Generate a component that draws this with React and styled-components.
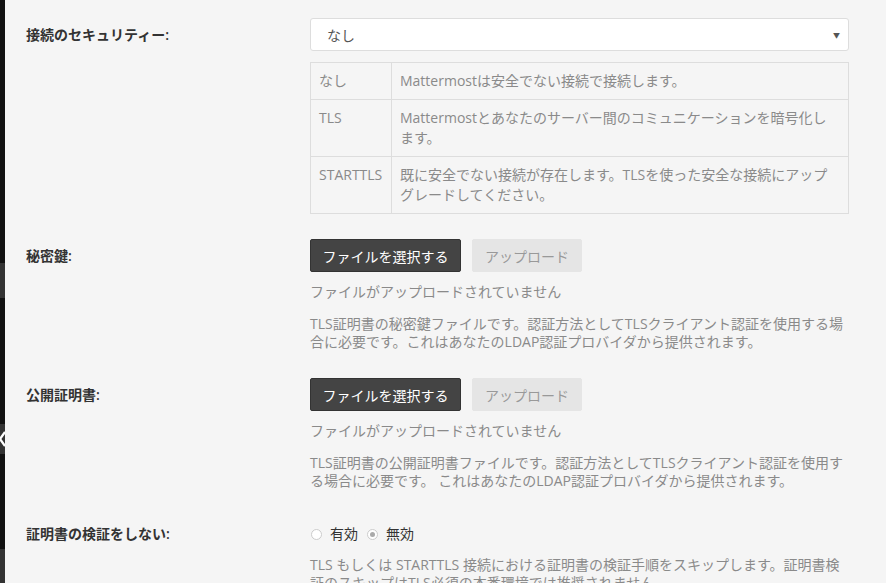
import React from "react";
import styled, { createGlobalStyle } from "styled-components";

const GlobalStyle = createGlobalStyle`
  html, body {
    margin: 0;
    padding: 0;
    background: #f5f5f5;
    overflow: hidden;
  }
  body {
    font-family: "Open Sans", "Noto Sans CJK JP", sans-serif;
    font-size: 14px;
    color: #333;
  }
`;

const Page = styled.div`
  display: flex;
  height: 583px;
  overflow: hidden;
`;

const Sidebar = styled.div`
  width: 5px;
  flex-shrink: 0;
  display: flex;
  flex-direction: column;
  background: #111;
`;

const SideItem = styled.div`
  height: ${(p) => p.h}px;
  margin-top: ${(p) => p.top}px;
  background: #333;
  display: flex;
  align-items: center;
  overflow: hidden;
  flex-shrink: 0;
`;

const Main = styled.div`
  flex: 1;
  padding: 18px 0 0 21px;
`;

const FormGroup = styled.div`
  display: grid;
  grid-template-columns: 284px 539px;
  margin-bottom: ${(p) => p.gap ?? 26}px;
`;

const Label = styled.div`
  padding-top: 7px;
  line-height: 20px;
  font-weight: 600;
  color: #333;
`;

const SelectBox = styled.div`
  height: 31px;
  border: 1px solid #ddd;
  border-radius: 3px;
  background: #fff;
  display: flex;
  align-items: center;
  justify-content: space-between;
  padding: 0 8px 0 16px;
  color: #555;
  margin-bottom: 11px;
`;

const Caret = styled.span`
  font-size: 7px;
  color: #555;
`;

const Table = styled.table`
  width: 100%;
  border-collapse: collapse;
  color: #8a8a8a;
  line-height: 20px;

  td {
    border: 1px solid #ddd;
    padding: 8px;
    vertical-align: top;
  }
  td:first-child {
    width: 64px;
  }
`;

const ButtonRow = styled.div`
  display: flex;
  gap: 11px;
`;

const Button = styled.div`
  height: 33px;
  box-sizing: border-box;
  padding: 0 ${(p) => (p.dark ? 11.5 : 12)}px;
  display: flex;
  align-items: center;
  border-radius: 2px;
  background: ${(p) => (p.dark ? "#444" : "#e5e5e5")};
  color: ${(p) => (p.dark ? "#fff" : "#999")};
  border: 1px solid ${(p) => (p.dark ? "#333" : "#e5e5e5")};
`;

const Status = styled.div`
  margin-top: 10px;
  line-height: 20px;
  color: #8a8a8a;
`;

const Help = styled.div`
  margin-top: ${(p) => p.top ?? 13}px;
  line-height: 18px;
  color: #8a8a8a;
  white-space: nowrap;
`;

const RadioRow = styled.div`
  padding-top: 7px;
  display: flex;
  align-items: center;
  line-height: 20px;
  color: #333;
`;

const Radio = styled.span`
  width: 11px;
  height: 11px;
  box-sizing: border-box;
  border-radius: 50%;
  border: 1px solid #ccc;
  background: #fff;
  margin: 0 8px 0 ${(p) => (p.first ? 1 : 9)}px;
  display: flex;
  align-items: center;
  justify-content: center;

  &::after {
    content: "";
    width: 5px;
    height: 5px;
    border-radius: 50%;
    background: ${(p) => (p.checked ? "#aaa" : "transparent")};
  }
`;

const Chevron = () => (
  <svg width="5" height="16" viewBox="0 0 5 16">
    <path d="M5 1 L0 8 L5 15" stroke="#fff" strokeWidth="2.2" fill="none" />
  </svg>
);

const FileField = ({ help }) => (
  <div>
    <ButtonRow>
      <Button dark>ファイルを選択する</Button>
      <Button>アップロード</Button>
    </ButtonRow>
    <Status>ファイルがアップロードされていません</Status>
    <Help>{help}</Help>
  </div>
);

export default function App() {
  return (
    <>
      <GlobalStyle />
      <Page>
        <Sidebar>
          <SideItem top={263} h={35} />
          <SideItem top={126} h={30}>
            <Chevron />
          </SideItem>
          <SideItem top={95} h={40} />
        </Sidebar>
        <Main>
          <FormGroup gap={25}>
            <Label>接続のセキュリティー:</Label>
            <div>
              <SelectBox>
                <span>なし</span>
                <Caret>▼</Caret>
              </SelectBox>
              <Table>
                <tbody>
                  <tr>
                    <td>なし</td>
                    <td>Mattermostは安全でない接続で接続します。</td>
                  </tr>
                  <tr>
                    <td>TLS</td>
                    <td>
                      Mattermostとあなたのサーバー間のコミュニケーションを暗号化し
                      <br />
                      ます。
                    </td>
                  </tr>
                  <tr>
                    <td>STARTTLS</td>
                    <td>
                      既に安全でない接続が存在します。TLSを使った安全な接続にアップ
                      <br />
                      グレードしてください。
                    </td>
                  </tr>
                </tbody>
              </Table>
            </div>
          </FormGroup>

          <FormGroup gap={27}>
            <Label>秘密鍵:</Label>
            <FileField
              help={
                <>
                  TLS証明書の秘密鍵ファイルです。認証方法としてTLSクライアント認証を使用する場
                  <br />
                  合に必要です。これはあなたのLDAP認証プロバイダから提供されます。
                </>
              }
            />
          </FormGroup>

          <FormGroup gap={27}>
            <Label>公開証明書:</Label>
            <FileField
              help={
                <>
                  TLS証明書の公開証明書ファイルです。認証方法としてTLSクライアント認証を使用す
                  <br />
                  る場合に必要です。 これはあなたのLDAP認証プロバイダから提供されます。
                </>
              }
            />
          </FormGroup>

          <FormGroup>
            <Label>証明書の検証をしない:</Label>
            <div>
              <RadioRow>
                <Radio first />
                有効
                <Radio checked />
                無効
              </RadioRow>
              <Help top={12}>
                TLS もしくは STARTTLS 接続における証明書の検証手順をスキップします。証明書検
                <br />
                証のスキップはTLS必須の本番環境では推奨されません。
              </Help>
            </div>
          </FormGroup>
        </Main>
      </Page>
    </>
  );
}
